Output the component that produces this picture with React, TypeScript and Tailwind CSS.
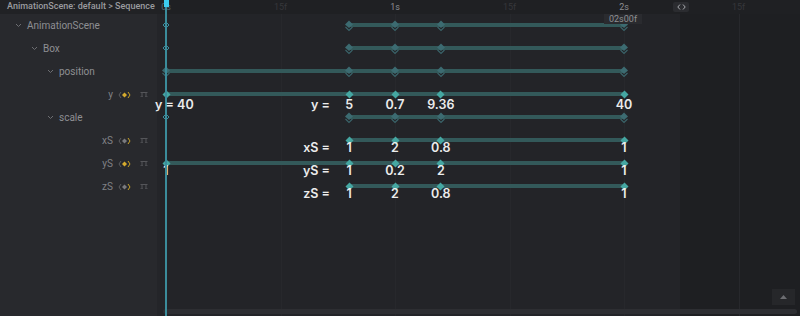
import React from 'react';

const PX_PER_SEC = 229;
const ORIGIN = 6; // 0s offset inside the timeline canvas
const ROW_H = 23;
const t2x = (s: number) => ORIGIN + s * PX_PER_SEC;

type Track = {
  label: string;
  depth: number;
  kind: 'group' | 'prop';
  hollowStart?: boolean;
  barFrom: number;
  keys: number[];
  active?: boolean;
};

const KEYS = [0.8, 1, 1.2, 2];

const tracks: Track[] = [
  { label: 'AnimationScene', depth: 0, kind: 'group', hollowStart: true, barFrom: 0.8, keys: KEYS },
  { label: 'Box', depth: 1, kind: 'group', hollowStart: true, barFrom: 0.8, keys: KEYS },
  { label: 'position', depth: 2, kind: 'group', barFrom: 0, keys: [0, ...KEYS] },
  { label: 'y', depth: 3, kind: 'prop', barFrom: 0, keys: [0, ...KEYS], active: true },
  { label: 'scale', depth: 2, kind: 'group', hollowStart: true, barFrom: 0.8, keys: KEYS },
  { label: 'xS', depth: 3, kind: 'prop', barFrom: 0.8, keys: KEYS },
  { label: 'yS', depth: 3, kind: 'prop', barFrom: 0, keys: [0, ...KEYS], active: true },
  { label: 'zS', depth: 3, kind: 'prop', barFrom: 0.8, keys: KEYS },
];

// value annotations drawn under the tracks
const labels: { row: number; dy: number; name?: string; values: [number, string][] }[] = [
  { row: 3, dy: 11, name: 'y =', values: [[0.8, '5'], [1, '0.7'], [1.2, '9.36'], [2, '40']] },
  { row: 5, dy: 8, name: 'xS =', values: [[0.8, '1'], [1, '2'], [1.2, '0.8'], [2, '1']] },
  { row: 6, dy: 8, name: 'yS =', values: [[0, '1'], [0.8, '1'], [1, '0.2'], [1.2, '2'], [2, '1']] },
  { row: 7, dy: 8, name: 'zS =', values: [[0.8, '1'], [1, '2'], [1.2, '0.8'], [2, '1']] },
];

const Chevron = () => (
  <svg width="7" height="5" viewBox="0 0 7 5" className="shrink-0">
    <path d="M1 1 L3.5 3.5 L6 1" fill="none" stroke="#6d6e72" strokeWidth="1" />
  </svg>
);

const KeyToggle = ({ active }: { active?: boolean }) => (
  <svg width="13" height="8" viewBox="0 0 13 8">
    <path d="M3 1 L1 4 L3 7" fill="none" stroke="#5c5d61" strokeWidth="1" />
    <path d="M6.5 1.5 L9 4 L6.5 6.5 L4 4 Z" fill={active ? '#d6ab2e' : '#7a7b7f'} />
    <path d="M10 1 L12 4 L10 7" fill="none" stroke="#c9a227" strokeWidth="1" />
  </svg>
);

const CurveIcon = () => (
  <svg width="8" height="7" viewBox="0 0 8 7">
    <path d="M0.5 1.5 H7.5" stroke="#55565a" strokeWidth="1" />
    <path d="M2 1.5 V5.5 M6 1.5 V5.5" stroke="#55565a" strokeWidth="1" />
    <path d="M0.5 5.5 H3 M5 5.5 H7.5" stroke="#4a4b4f" strokeWidth="1" />
  </svg>
);

const GroupKey = ({ x, y }: { x: number; y: number }) => (
  <svg width="10" height="12" viewBox="0 0 10 12" className="absolute" style={{ left: x - 5, top: y - 5 }}>
    <path d="M1.5 7 L5 10.5 L8.5 7" fill="none" stroke="#3a6369" strokeWidth="1.2" />
    <path d="M5 0.5 L9 4.5 L5 8 L1 4.5 Z" fill="#3c6b71" />
  </svg>
);

const BrightKey = ({ x, y }: { x: number; y: number }) => (
  <svg width="9" height="9" viewBox="0 0 9 9" className="absolute" style={{ left: x - 4.5, top: y - 4.5 }}>
    <path d="M4.5 0.5 L8.5 4.5 L4.5 8.5 L0.5 4.5 Z" fill="#45a7a2" />
  </svg>
);

const HollowKey = ({ x, y }: { x: number; y: number }) => (
  <svg width="8" height="8" viewBox="0 0 8 8" className="absolute" style={{ left: x - 4, top: y - 4 }}>
    <path d="M4 1 L7 4 L4 7 L1 4 Z" fill="#232428" stroke="#3a8fa0" strokeWidth="1" />
  </svg>
);

const TreeRow = ({ track }: { track: Track }) => {
  if (track.kind === 'group') {
    const pad = ['pl-[15px]', 'pl-[31px]', 'pl-[47px]'][track.depth];
    return (
      <div className={`h-[23px] flex items-center gap-[5px] ${pad}`}>
        <Chevron />
        <span className="text-[10px] text-[#8e8f93]">{track.label}</span>
      </div>
    );
  }
  return (
    <div className="h-[23px] flex items-center">
      <span className="w-[114px] text-right text-[10px] text-[#808185] pr-[1px]">{track.label}</span>
      <span className="ml-[4px] flex"><KeyToggle active={track.active} /></span>
      <span className="ml-[9px] flex"><CurveIcon /></span>
    </div>
  );
};

export default function App() {
  const ticks: { s: number; text: string; strong?: boolean }[] = [
    { s: 0.5, text: '15f' },
    { s: 1, text: '1s', strong: true },
    { s: 1.5, text: '15f' },
    { s: 2, text: '2s', strong: true },
    { s: 2.5, text: '15f' },
  ];

  return (
    <div className="relative w-[800px] h-[316px] overflow-hidden bg-[#1e1f22] font-['Roboto','Liberation_Sans',sans-serif] select-none">
      {/* header */}
      <div className="flex h-[14px]">
        <div className="w-[160px] shrink-0 bg-[#212225] flex items-center pl-[7px] overflow-hidden whitespace-nowrap">
          <span className="text-[9px] font-medium text-[#9a9b9f]">AnimationScene: default &gt; Sequence</span>
        </div>
        <div className="relative flex-1 bg-[#1f2023]">
          <span className="absolute top-0 text-[9px] leading-[14px] text-[#4f6570] -translate-x-1/2" style={{ left: t2x(0) }}>0s</span>
          {ticks.map((t) => (
            <span
              key={t.s}
              className={`absolute top-0 text-[9px] leading-[14px] -translate-x-1/2 ${t.strong ? 'text-[#8d8e92]' : 'text-[#36373b]'}`}
              style={{ left: t2x(t.s) }}
            >
              {t.text}
            </span>
          ))}
          <div className="absolute left-[513px] top-[2px] w-[16px] h-[10px] rounded-[2px] bg-[#2b2c30] flex items-center justify-center">
            <svg width="9" height="6" viewBox="0 0 9 6">
              <path d="M3 0.5 L0.8 3 L3 5.5 M6 0.5 L8.2 3 L6 5.5" fill="none" stroke="#a9aaae" strokeWidth="1" />
            </svg>
          </div>
        </div>
      </div>

      {/* body */}
      <div className="flex h-[302px]">
        <div className="w-[160px] shrink-0 bg-[#28292d] border-r-[3px] border-[#242529]">
          {tracks.map((t) => (
            <TreeRow key={t.label} track={t} />
          ))}
        </div>

        <div className="relative flex-1 bg-[#1e1f22]">
          {/* active range */}
          <div className="absolute left-0 top-0 bottom-0 w-[520px] bg-[#232428]" />
          {[0.5, 1, 1.5, 2, 2.5].map((s) => (
            <div key={s} className="absolute top-0 bottom-0 w-px bg-[#27282c]" style={{ left: t2x(s) }} />
          ))}

          {/* tracks */}
          {tracks.map((t, i) => {
            const y = i * ROW_H + 11;
            return (
              <React.Fragment key={t.label}>
                <div
                  className="absolute h-[4px] bg-[#33595a]"
                  style={{ left: t2x(t.barFrom), width: t2x(2) - t2x(t.barFrom), top: y - 2 }}
                />
                {t.hollowStart && <HollowKey x={t2x(0)} y={y} />}
                {t.keys.map((k) =>
                  t.kind === 'group' ? (
                    <GroupKey key={k} x={t2x(k)} y={y} />
                  ) : (
                    <BrightKey key={k} x={t2x(k)} y={y} />
                  )
                )}
              </React.Fragment>
            );
          })}

          {/* value labels */}
          {labels.map((l) => {
            const y = l.row * ROW_H + 11 + l.dy;
            return (
              <React.Fragment key={l.row}>
                {l.name && (
                  <span
                    className="absolute text-[12.5px] font-semibold leading-none text-[#ececec] -translate-y-1/2 whitespace-nowrap font-['Inter',sans-serif]"
                    style={{ right: 640 - 170, top: y }}
                  >
                    {l.name}
                  </span>
                )}
                {l.values.map(([s, v]) => (
                  <span
                    key={s}
                    className="absolute text-[12.5px] font-semibold leading-none text-[#ececec] -translate-x-1/2 -translate-y-1/2 whitespace-nowrap font-['Inter',sans-serif]"
                    style={{ left: t2x(s), top: y }}
                  >
                    {v}
                  </span>
                ))}
              </React.Fragment>
            );
          })}
          <span className="absolute left-[-5px] top-[85px] text-[12.5px] font-semibold leading-none text-[#ececec] whitespace-nowrap z-10 font-['Inter',sans-serif]">
            y = 40
          </span>

          {/* current time badge */}
          <div className="absolute left-[444px] top-0 h-[10px] px-[5px] bg-[#2a2b2f] text-[9px] leading-[10px] text-[#8f9094]">02s00f</div>

          {/* bottom-right button */}
          <div className="absolute left-[612px] top-[275px] w-[23px] h-[16px] bg-[#26272a] flex items-center justify-center">
            <svg width="7" height="4" viewBox="0 0 7 4">
              <path d="M0 4 L3.5 0 L7 4 Z" fill="#6c6d71" />
            </svg>
          </div>

          {/* horizontal scrollbar */}
          <div className="absolute left-[3px] right-[3px] top-[295px] h-[5px] rounded-full bg-[#2d2e32]" />
        </div>
      </div>

      {/* playhead */}
      <div className="absolute left-[165px] top-0 bottom-0 w-[2px] bg-[#3b8c9b]" />
      <div className="absolute left-[164px] top-0 w-[5px] h-[7px] bg-[#3ccbef]" />
    </div>
  );
}
